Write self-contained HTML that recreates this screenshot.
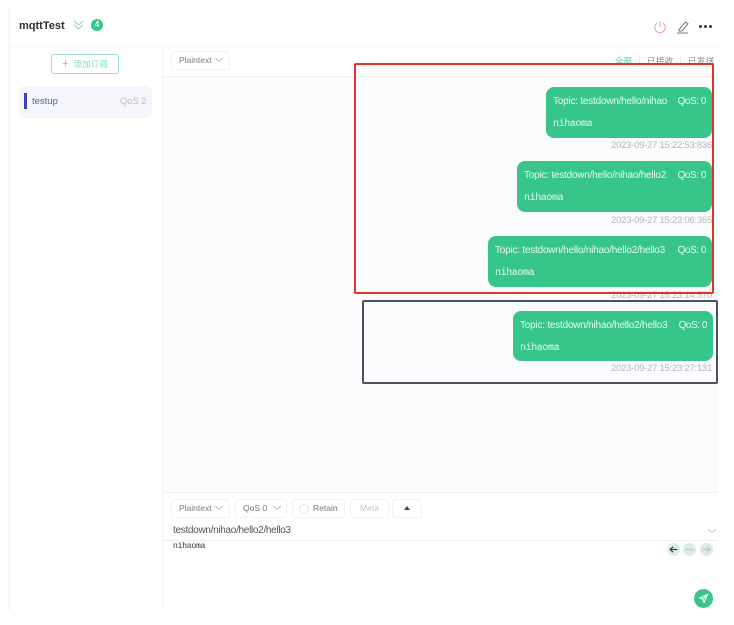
<!DOCTYPE html>
<html lang="zh"><head><meta charset="utf-8"><title>mqttTest</title>
<style>
html,body{margin:0;padding:0;background:#fff}
body{width:734px;height:625px;position:relative;overflow:hidden;font-family:"Liberation Sans","Noto Sans CJK SC",sans-serif}
.a{position:absolute;box-sizing:border-box;white-space:nowrap}
.btn{position:absolute;box-sizing:border-box;border:1px solid #f0f2f4;border-radius:3px;background:#fff;font-size:8.5px;color:#777;height:19px;line-height:17px;white-space:nowrap}
.b{position:absolute;box-sizing:border-box;background:#38c58a;border-radius:8px;height:51px;right:22px;color:#e4fbf1}
.t{position:absolute;top:9px;left:7px;font-size:10px;line-height:12px;white-space:nowrap;letter-spacing:-.22px}
.q{position:absolute;top:9px;right:6px;font-size:10px;line-height:12px;letter-spacing:-.45px}
.m{position:absolute;top:32px;left:7px;font:10px/12px "Liberation Mono",monospace;letter-spacing:-.4px}
.ts{position:absolute;right:22px;font-size:9.5px;line-height:12px;color:#b4b6ba;letter-spacing:-.25px}
.c{position:absolute;width:13px;height:13px;border-radius:50%;background:#dcebe6;top:543px}
.c svg{position:absolute;left:2px;top:3px}
</style></head><body>
<div class="a" style="left:8px;top:7px;width:2px;height:603px;background:#f6f6fa"></div>
<div class="a" style="left:10px;top:46px;width:708px;height:1px;background:#f7f7f9"></div>
<div class="a" style="left:19px;top:19px;font-size:11px;line-height:14px;font-weight:700;color:#2b2f36">mqttTest</div>
<svg class="a" style="left:72px;top:19px" width="13" height="12" viewBox="0 0 13 12" fill="none" stroke="#7fd6b2" stroke-width="1"><path d="M2 2l4.500 4L11 2M2 6l4.500 4L11 6"/></svg>
<div class="a" style="left:91px;top:19px;width:12px;height:12px;border-radius:50%;background:#38c58a;color:#fff;font-size:8px;font-weight:700;line-height:12px;text-align:center">4</div>
<svg class="a" style="left:653px;top:19px" width="14" height="15" viewBox="0 0 14 15" fill="none" stroke="#ee9a9a" stroke-width="1"><path d="M7 2v6M4.300 4a5.200 5.200 0 1 0 5.400 0"/></svg>
<svg class="a" style="left:675px;top:20px" width="16" height="14" viewBox="0 0 16 14" fill="none" stroke="#777" stroke-width="1"><path d="M4 9.500L10.500 2l2.500 1.800L7 11H4zM2 13h11"/></svg>
<div class="a" style="left:699px;top:25px;width:2.500px;height:2.500px;border-radius:50%;background:#444;box-shadow:5px 0 0 #444,10px 0 0 #444"></div>

<div class="a" style="left:51px;top:54px;width:68px;height:20px;border:1px solid #9fe0c5;border-radius:3px;color:#8ad8b8;font-size:8.500px;line-height:18px;text-align:center"><span style="font-size:11px;margin-right:5px;color:#6fcfa8">+</span>添加订阅</div>
<div class="a" style="left:19px;top:86px;width:133px;height:32px;border-radius:6px;background:#f5f5fc"></div>
<div class="a" style="left:24px;top:93px;width:3px;height:16px;background:#3f3fb0"></div>
<div class="a" style="left:32px;top:96px;font-size:9.500px;line-height:12px;color:#5a5f8c">testup</div>
<div class="a" style="left:120px;top:96px;font-size:9.500px;line-height:12px;color:#bcbcc6;letter-spacing:-.1px">QoS 2</div>

<div class="a" style="left:162px;top:47px;width:1px;height:563px;background:#f3f3f6"></div>
<div class="a" style="left:163px;top:76px;width:555px;height:416px;background:#fbfcfe;box-shadow:inset 0 1px 1px #f0f0f3"></div>
<div class="a" style="left:163px;top:492px;width:555px;height:1px;background:#eff0f2"></div>
<div class="btn" style="left:171px;top:51px;width:59px;padding-left:7px">Plaintext<svg style="position:absolute;left:42px;top:5px" width="10" height="6" fill="none" stroke="#bbb"><path d="M1 1l4 3.500L9 1"/></svg></div>
<div class="a" style="left:615px;top:55px;font-size:8.500px;line-height:12px;color:#55cc9a">全部</div>
<div class="a" style="left:639px;top:55px;font-size:8.500px;line-height:12px;color:#888;border-left:1px solid #eee;padding-left:7px;letter-spacing:.4px">已接收</div>
<div class="a" style="left:680px;top:55px;font-size:8.500px;line-height:12px;color:#888;border-left:1px solid #eee;padding-left:7px;letter-spacing:.4px">已发送</div>

<div class="b" style="top:87px;width:166px"><div class="t">Topic: testdown/hello/nihao</div><div class="q">QoS: 0</div><div class="m">nihaoma</div></div>
<div class="ts" style="top:140px">2023-09-27 15:22:53:836</div>
<div class="b" style="top:161px;width:195px"><div class="t">Topic: testdown/hello/nihao/hello2</div><div class="q">QoS: 0</div><div class="m">nihaoma</div></div>
<div class="ts" style="top:215px">2023-09-27 15:23:06:365</div>
<div class="b" style="top:236px;width:224px"><div class="t">Topic: testdown/hello/nihao/hello2/hello3</div><div class="q">QoS: 0</div><div class="m">nihaoma</div></div>
<div class="ts" style="top:290px">2023-09-27 15:23:14:570</div>
<div class="b" style="top:311px;width:200px;height:50px;right:21px"><div class="t">Topic: testdown/nihao/hello2/hello3</div><div class="q">QoS: 0</div><div class="m">nihaoma</div></div>
<div class="ts" style="top:363px">2023-09-27 15:23:27:131</div>

<div class="a" style="left:354px;top:63px;width:360px;height:231px;border:2px solid #e0332c;border-radius:2px"></div>
<div class="a" style="left:362px;top:300px;width:356px;height:84px;border:2px solid #4f5259;border-radius:2px"></div>

<div class="btn" style="left:171px;top:499px;width:59px;padding-left:7px">Plaintext<svg style="position:absolute;left:42px;top:5px" width="10" height="6" fill="none" stroke="#bbb"><path d="M1 1l4 3.500L9 1"/></svg></div>
<div class="btn" style="left:235px;top:499px;width:52px;padding-left:7px">QoS 0<svg style="position:absolute;left:36px;top:5px" width="10" height="6" fill="none" stroke="#bbb"><path d="M1 1l4 3.500L9 1"/></svg></div>
<div class="btn" style="left:292px;top:499px;width:53px;padding-left:20px"><span style="position:absolute;left:6px;top:4px;width:8px;height:8px;border:1px solid #e2e2e2;border-radius:50%"></span>Retain</div>
<div class="btn" style="left:350px;top:499px;width:39px;text-align:center;color:#c2c2c2">Meta</div>
<div class="btn" style="left:392px;top:499px;width:30px"><span style="position:absolute;left:11px;top:6px;border:3.500px solid transparent;border-top:0;border-bottom:4px solid #444"></span></div>

<div class="a" style="left:173px;top:524px;font-size:10px;line-height:14px;color:#555;letter-spacing:-.3px">testdown/nihao/hello2/hello3</div>
<svg class="a" style="left:707px;top:528px" width="10" height="6" fill="none" stroke="#c4c4c4"><path d="M1 1l4 3.500L9 1"/></svg>
<div class="a" style="left:163px;top:540px;width:555px;height:1px;background:#eeeef1"></div>
<div class="a" style="left:173px;top:541px;font:8px/11px 'Liberation Mono',monospace;color:#333;letter-spacing:-.2px">nihaoma</div>
<div class="c" style="left:667px"><svg width="9" height="7" fill="none" stroke="#345" stroke-width="1.200"><path d="M4 .8L1.200 3.500 4 6.200M1.200 3.500H8.500"/></svg></div>
<div class="c" style="left:683px"><svg width="9" height="7" fill="none" stroke="#b5cfc5" stroke-width="1.200"><path d="M1 3.500H8"/></svg></div>
<div class="c" style="left:700px"><svg width="9" height="7" fill="none" stroke="#b5cfc5" stroke-width="1.200"><path d="M5 .8L7.800 3.500 5 6.200M7.800 3.500H.5"/></svg></div>
<div class="a" style="left:694px;top:589px;width:19px;height:19px;border-radius:50%;background:#38c58a"></div>
<svg class="a" style="left:698px;top:593px" width="11" height="11" viewBox="0 0 11 11" fill="none" stroke="#fff" stroke-width="1"><path d="M1.500 5L9.500 1.500L6 9.500L4.800 6.200zM4.800 6.200L9.500 1.500"/></svg>
</body></html>
